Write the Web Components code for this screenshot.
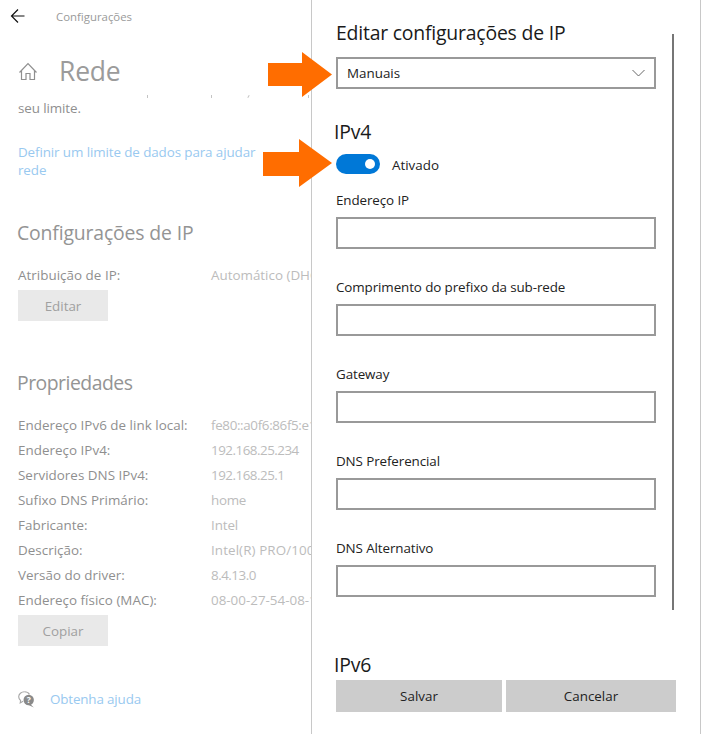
<!DOCTYPE html>
<html lang="pt">
<head>
<meta charset="utf-8">
<style>
  html, body { margin: 0; height: 100%; background: #fff; }
  body { font-family: "Open Sans", "Noto Sans", sans-serif; overflow: hidden; }
</style>
</head>
<body>
<ip-app>
  <left-pane slot="left"></left-pane>
  <edit-panel slot="right"></edit-panel>
</ip-app>

<script>
class IpApp extends HTMLElement {
  constructor() {
    super();
    this.attachShadow({mode: 'open'}).innerHTML = `
      <style>
        :host { display: flex; width: 704px; height: 734px; position: relative; overflow: hidden; }
        .left { width: 311px; flex: none; overflow: hidden; }
        .right { width: 388px; flex: none; border-left: 1px solid #c8c8c8; border-right: 1px solid #c8c8c8; }
        svg { position: absolute; }
        .a1 { left: 268px; top: 52px; }
        .a2 { left: 263px; top: 139px; }
      </style>
      <div class="left"><slot name="left"></slot></div>
      <div class="right"><slot name="right"></slot></div>
      <svg class="a1" width="64" height="45" viewBox="0 0 64 45"><path d="M0 11H34V0L64 22.500 34 45V34H0Z" fill="#ff6d00"/></svg>
      <svg class="a2" width="69" height="48" viewBox="0 0 69 48"><path d="M0 13H36V0L69 24 36 48V37H0Z" fill="#ff6d00"/></svg>
    `;
  }
}
customElements.define('ip-app', IpApp);

class InfoRow extends HTMLElement {
  constructor() {
    super();
    const tight = this.getAttribute('tight') || '0';
    this.attachShadow({mode: 'open'}).innerHTML = `
      <style>
        :host { display: grid; grid-template-columns: 193px auto; height: 25px; align-items: center; font-size: 13.4px; letter-spacing: .03px; white-space: nowrap; color: #8f8f8f; }
        .v { color: #bcbcbc; letter-spacing: ${tight}px; }
      </style>
      <span>${this.getAttribute('label')}</span><span class="v">${this.getAttribute('value')}</span>
    `;
  }
}
customElements.define('info-row', InfoRow);

class GreyButton extends HTMLElement {
  constructor() {
    super();
    this.attachShadow({mode: 'open'}).innerHTML = `
      <style>
        :host { display: flex; width: 90px; height: 31px; align-items: center; justify-content: center; background: #e9e9e9; color: #a0a0a0; font-size: 13.4px; }
      </style>
      <slot></slot>
    `;
  }
}
customElements.define('grey-button', GreyButton);

class LeftPane extends HTMLElement {
  constructor() {
    super();
    this.attachShadow({mode: 'open'}).innerHTML = `
      <style>
        :host { display: block; width: 311px; height: 734px; padding-left: 18px; box-sizing: border-box; white-space: nowrap; color: #8f8f8f; }
        .top { display: flex; align-items: center; height: 32px; font-size: 11.4px; color: #9a9a9a; }
        .top svg { margin-left: -12px; margin-right: 30px; }
        .title { display: flex; align-items: center; height: 46px; margin-top: 16px; font-size: 26.5px; letter-spacing: -.2px; color: #9b9b9b; }
        .title svg { margin-left: 1px; margin-right: 21px; }
        .cut { display: flex; height: 3px; margin-top: 1px; }
        .cut i { width: 1px; height: 3px; background: #c4c4c4; }
        p { margin: 0; font-size: 13.4px; letter-spacing: -.1px; line-height: 19px; }
        .link { color: #99c9f0; }
        h2 { margin: 0; font-size: 19.4px; font-weight: 400; letter-spacing: -.15px; color: #949494; line-height: 28px; }
        .help { display: flex; align-items: center; margin-top: 41px; font-size: 13.4px; letter-spacing: -.15px; height: 24px; }
        .help svg { margin-right: 15px; }
      </style>
      <div class="top">
        <svg width="20" height="16" viewBox="0 0 20 16" fill="none" stroke="#111" stroke-width="1.2"><path d="M6.500 8H18.500M12 1.500 5.500 8 12 14.500"/></svg>
        <span>Configurações</span>
      </div>
      <div class="title">
        <svg width="19" height="19" viewBox="0 0 19 19" fill="none" stroke="#8f8f8f" stroke-width="1.200"><path d="M.5 10.500 9 1.500 17.500 10.500M2.500 8V17.500H7V11.500H11V17.500H15.500V8"/></svg>
        <span>Rede</span>
      </div>
      <div class="cut"><i style="margin-left:129px"></i><i style="margin-left:63px"></i><i style="margin-left:36px;transform:rotate(30deg)"></i><i style="margin-left:59px"></i></div>
      <p style="margin-top:1px">seu limite.</p>
      <p class="link" style="margin-top:25px;line-height:18px">Definir um limite de dados para ajudar<br>rede</p>
      <h2 style="margin-top:40px;margin-left:-1px">Configurações de IP</h2>
      <info-row style="margin-top:15px" label="Atribuição de IP:" value="Automático (DHCP)"></info-row>
      <grey-button style="margin-top:3px">Editar</grey-button>
      <h2 style="margin-top:48px;margin-left:-1px;letter-spacing:-.5px">Propriedades</h2>
      <info-row style="margin-top:15px" tight="-.35" label="Endereço IPv6 de link local:" value="fe80::a0f6:86f5:e1b2"></info-row>
      <info-row tight="-.5" label="Endereço IPv4:" value="192.168.25.234"></info-row>
      <info-row tight="-.5" label="Servidores DNS IPv4:" value="192.168.25.1"></info-row>
      <info-row tight="-.3" label="Sufixo DNS Primário:" value="home"></info-row>
      <info-row tight="-.1" label="Fabricante:" value="Intel"></info-row>
      <info-row tight=".1" label="Descrição:" value="Intel(R) PRO/1000 MT"></info-row>
      <info-row tight="-.5" label="Versão do driver:" value="8.4.13.0"></info-row>
      <info-row tight="0" label="Endereço físico (MAC):" value="08-00-27-54-08-1F"></info-row>
      <grey-button style="margin-top:3px">Copiar</grey-button>
      <div class="help">
        <svg width="17" height="17" viewBox="0 0 17 17">
          <path d="M6.500 .8C3.300 .8.700 3 .7 5.800c0 1.500.8 2.800 1.900 3.700L2.200 12l2.800-1.700" fill="none" stroke="#a6a6a6" stroke-width="1.100"/>
          <path d="M6.500 .8c2.200 0 4 1 5 2.600" fill="none" stroke="#a6a6a6" stroke-width="1.100"/>
          <circle cx="10.700" cy="9" r="5.200" fill="#8a8a8a"/>
          <path d="M12.500 13.200 15.800 16.500 10.500 14Z" fill="#8a8a8a"/>
          <text x="10.700" y="12" font-size="8.500" font-weight="700" text-anchor="middle" fill="#fff" font-family="Open Sans">?</text>
        </svg>
        <span class="link">Obtenha ajuda</span>
      </div>
    `;
  }
}
customElements.define('left-pane', LeftPane);

class TextField extends HTMLElement {
  constructor() {
    super();
    this.attachShadow({mode: 'open'}).innerHTML = `
      <style>
        :host { display: block; }
        label { display: block; height: 26px; line-height: 19px; font-size: 13.4px; letter-spacing: -.1px; color: #222; }
        div { width: 320px; height: 32px; box-sizing: border-box; border: 2px solid #999; background: #fff; }
      </style>
      <label>${this.getAttribute('label')}</label>
      <div></div>
    `;
  }
}
customElements.define('text-field', TextField);

class ToggleSwitch extends HTMLElement {
  constructor() {
    super();
    this.attachShadow({mode: 'open'}).innerHTML = `
      <style>
        :host { display: flex; align-items: center; gap: 12px; height: 20px; font-size: 13.4px; color: #222; }
        .track { display: flex; align-items: center; justify-content: flex-end; width: 44px; height: 20px; padding-right: 5px; box-sizing: border-box; border-radius: 10px; background: #0078d7; }
        .knob { width: 10px; height: 10px; border-radius: 50%; background: #fff; }
        .text { padding-top: 2px; }
      </style>
      <span class="track"><span class="knob"></span></span>
      <span class="text"><slot></slot></span>
    `;
  }
}
customElements.define('toggle-switch', ToggleSwitch);

class EditPanel extends HTMLElement {
  constructor() {
    super();
    this.attachShadow({mode: 'open'}).innerHTML = `
      <style>
        :host { display: block; height: 734px; padding-left: 24px; box-sizing: border-box; position: relative; color: #1a1a1a; }
        h1 { margin: 0; padding-top: 19px; height: 38px; font-size: 19.4px; line-height: 28px; font-weight: 400; letter-spacing: -.2px; }
        h2 { margin: 0; font-size: 19.4px; line-height: 26px; font-weight: 400; letter-spacing: -.2px; }
        .select { display: flex; align-items: center; justify-content: space-between; width: 320px; height: 32px; box-sizing: border-box; border: 2px solid #999; padding: 0 9px; font-size: 13.4px; color: #222; }
        .bar { position: absolute; left: 360px; top: 34px; width: 2px; height: 576px; background: #767676; }
        .fields { display: flex; flex-direction: column; gap: 29px; }
        .btns { display: flex; gap: 4px; margin-top: 2px; }
        .btns span { display: flex; align-items: center; justify-content: center; height: 32px; background: #ccc; font-size: 13.4px; color: #222; }
      </style>
      <h1>Editar configurações de IP</h1>
      <div class="select">
        <span>Manuais</span>
        <svg width="13" height="8" viewBox="0 0 13 8" fill="none" stroke="#666" stroke-width="1"><path d="M.5 1 6.500 7 12.500 1"/></svg>
      </div>
      <h2 style="margin-top:30px;margin-left:-2px">IPv4</h2>
      <toggle-switch style="margin-top:9px">Ativado</toggle-switch>
      <div class="fields" style="margin-top:17px">
        <text-field label="Endereço IP"></text-field>
        <text-field label="Comprimento do prefixo da sub-rede"></text-field>
        <text-field label="Gateway"></text-field>
        <text-field label="DNS Preferencial"></text-field>
        <text-field label="DNS Alternativo"></text-field>
      </div>
      <h2 style="margin-top:55px;margin-left:-2px">IPv6</h2>
      <div class="btns"><span style="width:166px">Salvar</span><span style="width:170px">Cancelar</span></div>
      <div class="bar"></div>
    `;
  }
}
customElements.define('edit-panel', EditPanel);
</script>
</body>
</html>
